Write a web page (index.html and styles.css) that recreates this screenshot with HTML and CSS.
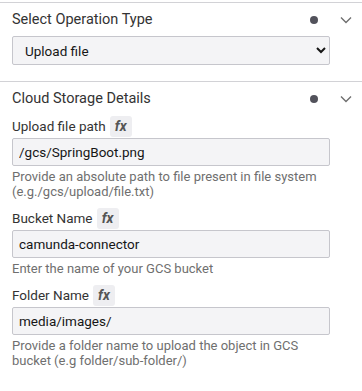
FILE: index.html
```html
<!DOCTYPE html>
<html lang="en">
<head>
    <meta charset="UTF-8">
    <meta name="viewport" content="width=device-width, initial-scale=1.0">
    <title>Properties</title>
    <link rel="stylesheet" href="styles.css">
</head>
<body>
    <div class="panel">
        <div class="group">
            <div class="group-header">
                <span class="group-title">Select Operation Type</span>
                <span class="dot"></span>
                <svg class="arrow" width="12" height="8" viewBox="0 0 12 8"><path d="M1 1.5l5 5 5-5" fill="none" stroke="#6f6f6f" stroke-width="1.4"/></svg>
            </div>
            <div class="group-body">
                <div class="select-wrap">
                    <select class="select">
                        <option>Upload file</option>
                        <option>Download file</option>
                    </select>
                </div>
            </div>
        </div>

        <div class="group">
            <div class="group-header">
                <span class="group-title">Cloud Storage Details</span>
                <span class="dot"></span>
                <svg class="arrow" width="12" height="8" viewBox="0 0 12 8"><path d="M1 1.5l5 5 5-5" fill="none" stroke="#6f6f6f" stroke-width="1.4"/></svg>
            </div>
            <div class="group-body">
                <div class="field">
                    <div class="label-row">
                        <label for="file_path">Upload file path</label>
                        <span class="fx">fx</span>
                    </div>
                    <input type="text" id="file_path" class="input" value="/gcs/SpringBoot.png">
                    <div class="help">Provide an absolute path to file present in file system (e.g./gcs/upload/file.txt)</div>
                </div>
                <div class="field">
                    <div class="label-row">
                        <label for="bucket">Bucket Name</label>
                        <span class="fx">fx</span>
                    </div>
                    <input type="text" id="bucket" class="input" value="camunda-connector">
                    <div class="help">Enter the name of your GCS bucket</div>
                </div>
                <div class="field">
                    <div class="label-row">
                        <label for="folder">Folder Name</label>
                        <span class="fx">fx</span>
                    </div>
                    <input type="text" id="folder" class="input" value="media/images/">
                    <div class="help">Provide a folder name to upload the object in GCS bucket (e.g folder/sub-folder/)</div>
                </div>
            </div>
        </div>
    </div>
</body>
</html>
```

FILE: styles.css
```css
body { margin: 0; background: #fff; font-family: Roboto, "Noto Sans", sans-serif; color: #161616; }
.panel { padding-top: 2px; }
.group { border-top: 1px solid #d2d2d6; }
.group-header {
    display: flex;
    align-items: center;
    height: 33px;
    padding: 0 10px 0 12px;
}
.group-title { flex: 1; font-size: 14.5px; color: #333; }
.dot { width: 8px; height: 8px; border-radius: 50%; background: #52525b; margin-right: 22px; }
.arrow { display: block; }
.group-body { padding: 0 32px 16px 12px; }

.select-wrap { height: 29px; }
.select {
    width: 100%;
    height: 29px;
    font-family: inherit;
    font-size: 13.5px;
    color: #161616;
    background: #f4f4f6;
    border: 1px solid #c6c6cc;
    border-radius: 2px;
    padding: 0 8px;
}

.field { margin-bottom: 8px; }
.label-row { display: flex; align-items: center; height: 22px; }
.label-row label { font-size: 13.5px; color: #333; }
.fx {
    margin-left: 4px;
    background: #eeeef1;
    border-radius: 3px;
    width: 22px;
    text-align: center;
    height: 21px;
    line-height: 21px;
    font-size: 14px;
    font-weight: bold;
    font-style: italic;
    color: #555;
}
.input {
    display: block;
    box-sizing: border-box;
    width: 100%;
    height: 28px;
    margin-top: 1px;
    padding: 0 6px;
    font-family: inherit;
    font-size: 13.5px;
    color: #161616;
    background: #f4f4f6;
    border: 1px solid #c6c6cc;
    border-radius: 2px;
}
.help { margin-top: 3px; font-size: 13px; line-height: 15px; color: #6f6f6f; }
```
